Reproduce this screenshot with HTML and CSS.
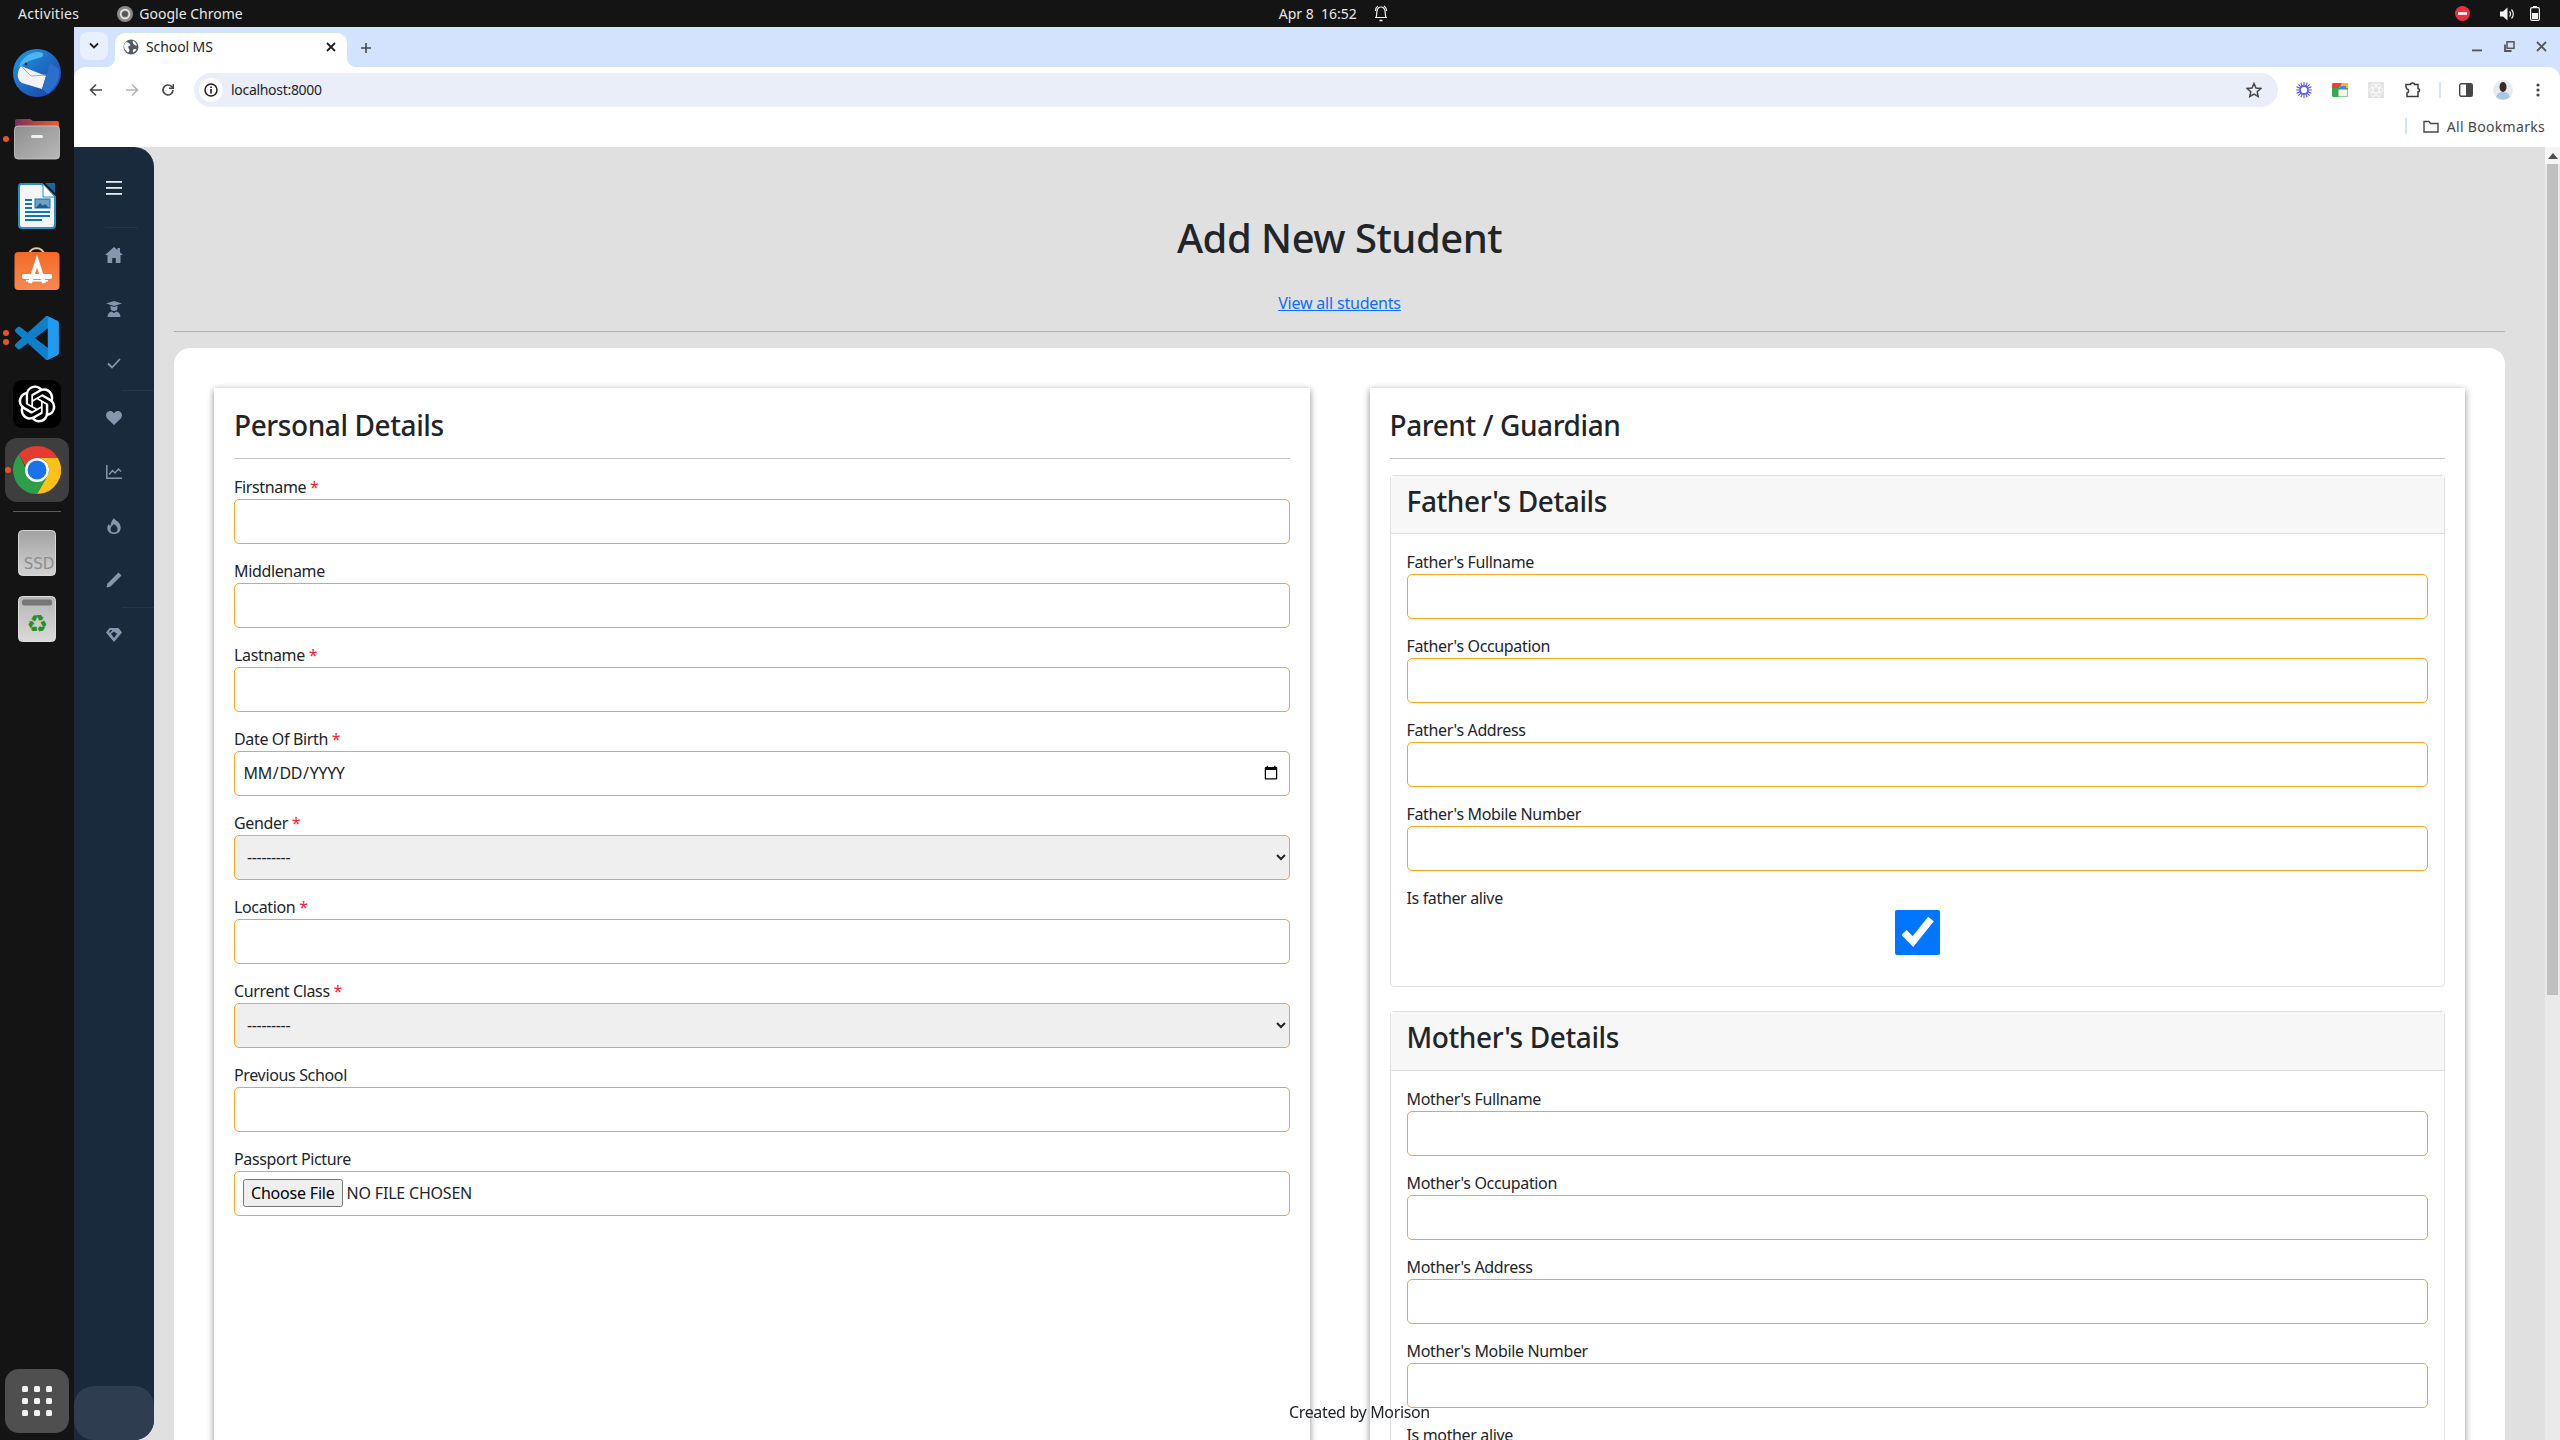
FILE: index.html
```html
<!DOCTYPE html>
<html lang="en">
<head>
<meta charset="utf-8">
<title>School MS</title>
<link rel="stylesheet" href="styles.css">
</head>
<body>
<header class="topbar">
  <span class="top-activities">Activities</span>
  <svg class="top-chrome" width="16" height="16" viewBox="0 0 16 16"><circle cx="8" cy="8" r="8" fill="#8a8a8a"/><circle cx="8" cy="8" r="4.4" fill="none" stroke="#e8e8e8" stroke-width="1.6"/><circle cx="8" cy="8" r="2.8" fill="#555"/></svg>
  <span class="top-app">Google Chrome</span>
  <span class="top-clock">Apr 8&nbsp; 16:52</span>
  <svg class="top-bell" width="14" height="17" viewBox="0 0 14 17" fill="none" stroke="#f2f2f2" stroke-width="1.2"><path d="M2 12.500C3 10 2.500 8 3 6c.5-2.500 2-4 4-4s3.500 1.500 4 4c.5 2-.0 4 1 6.500zM1 12.500h12"/><path d="M1.500 6C1.500 4 2.500 2 4 1M12.500 6c0-2-1-4-2.500-5"/><path d="M5.500 15.500h3" stroke-width="1.600"/></svg>
  <svg class="top-red" width="15" height="15" viewBox="0 0 15 15"><circle cx="7.500" cy="7.500" r="7.500" fill="#ed2f46"/><rect x="3" y="6.200" width="9" height="2.600" fill="#fff"/></svg>
  <svg class="top-sound" width="15" height="14" viewBox="0 0 15 14" fill="none"><path d="M0 4.500h3L7.500 0.500v13L3 9.500H0z" fill="#f2f2f2"/><path d="M9.500 4.500a3.500 3.500 0 0 1 0 5M11.500 2.500a6.500 6.500 0 0 1 0 9" stroke="#f2f2f2" stroke-width="1.200"/></svg>
  <svg class="top-batt" width="10" height="15" viewBox="0 0 10 15"><rect x="0.600" y="1.600" width="8.800" height="12.800" rx="1.500" fill="none" stroke="#f2f2f2" stroke-width="1.200"/><rect x="3" y="0" width="4" height="2" fill="#f2f2f2"/><rect x="2" y="7" width="6" height="6" fill="#f2f2f2"/></svg>
</header>

<div class="desktop">
  <nav class="dock">
    <div class="dock-item">
      <svg width="48" height="48" viewBox="0 0 48 48"><defs><linearGradient id="tb" x1="0" y1="0" x2="1" y2="1"><stop offset="0" stop-color="#1c9be8"/><stop offset="1" stop-color="#1f3b9e"/></linearGradient></defs><circle cx="24" cy="24" r="24" fill="url(#tb)"/><path d="M6 18c2-8 9-14 18-15 10 0 5 5 5 5l-13 4z" fill="#4db4ee"/><path d="M8 17L33 27 29 40 9 34C3 31 4 22 8 17z" fill="#f3f3f6"/><path d="M8 17l10 10 15-1" fill="none" stroke="#a9a9b5" stroke-width="1"/><path d="M33 27L29 40l6 5 8-9c3-5 4-12 3-16l-9-6z" fill="#2a6fc9"/><circle cx="13" cy="15" r="1.500" fill="#3a2a55"/></svg>
    </div>
    <div class="dock-item">
      <span class="dock-dot dot-mid"></span>
      <svg width="46" height="42" viewBox="0 0 46 42"><defs><linearGradient id="ft" x1="0" y1="0" x2="1" y2="0"><stop offset="0" stop-color="#7a2f5e"/><stop offset="1" stop-color="#e8622a"/></linearGradient><linearGradient id="fb" x1="0" y1="0" x2="1" y2="1"><stop offset="0" stop-color="#8f8f8f"/><stop offset="1" stop-color="#b8b8b8"/></linearGradient></defs><path d="M1 10V3q0-2 2-2h13l3 2h24q2 0 2 2v7z" fill="url(#ft)"/><rect x="0.500" y="8" width="45" height="33" rx="3.500" fill="url(#fb)" stroke="#cfcfcf" stroke-width="0.800"/><rect x="17" y="17" width="12" height="3" rx="1.500" fill="#f2f2f2"/></svg>
    </div>
    <div class="dock-item">
      <svg width="38" height="46" viewBox="0 0 38 46"><path d="M3 1h21l13 13v28q0 3-3 3H4q-3 0-3-3V4q0-3 2-3z" fill="#f3f5f7" stroke="#2b90c4" stroke-width="2"/><path d="M27 0h10v10z" fill="#146a9f"/><path d="M25 1v13h12z" fill="#ffffff" stroke="#2b90c4" stroke-width="1"/><path d="M7 16h7v2H7zM7 20h7v2H7zM7 24h7v2H7zM7 28h25v2H7zM7 32h25v2H7zM7 36h17v2H7z" fill="#1273b5"/><rect x="17" y="16" width="15" height="9" fill="#6f9fc4" stroke="#1273b5"/><path d="M18 25l4-5 3 3 2-2 4 4z" fill="#1b5c8e"/></svg>
    </div>
    <div class="dock-item">
      <svg class="icon-software" width="46" height="44" viewBox="0 0 46 44"><defs><linearGradient id="sw" x1="0" y1="0" x2="0" y2="1"><stop offset="0" stop-color="#f46a25"/><stop offset="1" stop-color="#f58a52"/></linearGradient></defs><path d="M15 8c0-9 15-9 15 0" fill="none" stroke="#eacb9c" stroke-width="2"/><rect x="0.500" y="5" width="45" height="38" rx="4" fill="url(#sw)"/><path d="M16 36L23 14l7 22" fill="none" stroke="#fff" stroke-width="4"/><rect x="8" y="27" width="30" height="5" rx="2" fill="#fff"/><rect x="12" y="33" width="22" height="1.500" fill="#fff"/></svg>
    </div>
    <div class="dock-item">
      <span class="dock-dot dot-two-a"></span><span class="dock-dot dot-two-b"></span>
      <svg width="44" height="44" viewBox="0 0 100 100"><path d="M96 10.800 75.400.900a6.200 6.200 0 0 0-7.100 1.200L28.900 38 11.700 25a4.200 4.200 0 0 0-5.300.2L.9 30.200a4.200 4.200 0 0 0 0 6.200L15.800 50 .9 63.600a4.200 4.200 0 0 0 0 6.200l5.500 5a4.200 4.200 0 0 0 5.300.2L28.900 62l39.400 35.900a6.200 6.200 0 0 0 7.100 1.200L96 89.200a6.200 6.200 0 0 0 3.500-5.600V16.400a6.200 6.200 0 0 0-3.500-5.600zM75 72.700 45.100 50 75 27.300z" fill="#0f7fc9"/><path d="M75.400 99.100a6.200 6.200 0 0 1-7.100-1.200 3.600 3.600 0 0 0 6.200-2.600V4.700a3.600 3.600 0 0 0-6.200-2.600 6.200 6.200 0 0 1 7.100-1.200L96 10.800a6.200 6.200 0 0 1 3.500 5.600v67.200a6.200 6.200 0 0 1-3.500 5.600z" fill="#1f9cf0"/></svg>
    </div>
    <div class="dock-item">
      <svg width="48" height="48" viewBox="0 0 48 48"><rect width="48" height="48" rx="9" fill="#000"/><g transform="translate(5.500 5.500) scale(1.540)"><path fill="#fff" d="M22.2819 9.8211a5.9847 5.9847 0 0 0-.5157-4.9108 6.0462 6.0462 0 0 0-6.5098-2.9A6.0651 6.0651 0 0 0 4.9807 4.1818a5.9847 5.9847 0 0 0-3.9977 2.9 6.0462 6.0462 0 0 0 .7427 7.0966 5.98 5.98 0 0 0 .511 4.9107 6.051 6.051 0 0 0 6.5146 2.9001A5.9847 5.9847 0 0 0 13.2599 24a6.0557 6.0557 0 0 0 5.7718-4.2058 5.9894 5.9894 0 0 0 3.9977-2.9001 6.0557 6.0557 0 0 0-.7475-7.0729zm-9.022 12.6081a4.4755 4.4755 0 0 1-2.8764-1.0408l.1419-.0804 4.7783-2.7582a.7948.7948 0 0 0 .3927-.6813v-6.7369l2.02 1.1686a.071.071 0 0 1 .038.052v5.5826a4.504 4.504 0 0 1-4.4945 4.4944zm-9.6607-4.1254a4.4708 4.4708 0 0 1-.5346-3.0137l.142.0852 4.783 2.7582a.7712.7712 0 0 0 .7806 0l5.8428-3.3685v2.3324a.0804.0804 0 0 1-.0332.0615L9.74 19.9502a4.4992 4.4992 0 0 1-6.1408-1.6464zM2.3408 7.8956a4.485 4.485 0 0 1 2.3655-1.9728V11.6a.7664.7664 0 0 0 .3879.6765l5.8144 3.3543-2.0201 1.1685a.0757.0757 0 0 1-.071 0l-4.8303-2.7865A4.504 4.504 0 0 1 2.3408 7.872zm16.5963 3.8558L13.1038 8.364 15.1192 7.2a.0757.0757 0 0 1 .071 0l4.8303 2.7913a4.4944 4.4944 0 0 1-.6765 8.1042v-5.6772a.79.79 0 0 0-.407-.667zm2.0107-3.0231l-.142-.0852-4.7735-2.7818a.7759.7759 0 0 0-.7854 0L9.409 9.2297V6.8974a.0662.0662 0 0 1 .0284-.0615l4.8303-2.7866a4.4992 4.4992 0 0 1 6.6802 4.66zM8.3065 12.863l-2.02-1.1638a.0804.0804 0 0 1-.038-.0567V6.0742a4.4992 4.4992 0 0 1 7.3757-3.4537l-.142.0805L8.704 5.459a.7948.7948 0 0 0-.3927.6813zm1.0976-2.3654l2.602-1.4998 2.6069 1.4998v2.9994l-2.5974 1.4997-2.6067-1.4997Z"/></g></svg>
    </div>
    <div class="dock-item dock-active">
      <span class="dock-dot dot-mid"></span>
      <svg width="48" height="48" viewBox="0 0 48 48"><path d="M24 0a24 24 0 0 1 20.800 12H24a12 12 0 0 0-11.400 8.300L6 8.200A24 24 0 0 1 24 0z" fill="#e53b30"/><path d="M44.800 12A24 24 0 0 1 24 48l10.400-18A12 12 0 0 0 24 12z" fill="#fdc117"/><path d="M24 48A24 24 0 0 1 6 8.200L16.400 30a12 12 0 0 0 18 0z" fill="#2f9e48"/><circle cx="24" cy="24" r="12" fill="#fff"/><circle cx="24" cy="24" r="9.500" fill="#1a73e8"/></svg>
    </div>
    <div class="dock-sep"></div>
    <div class="dock-item">
      <svg width="38" height="46" viewBox="0 0 38 46"><defs><linearGradient id="ssd" x1="0" y1="0" x2="0" y2="1"><stop offset="0" stop-color="#a2a2a2"/><stop offset="1" stop-color="#d2d2d2"/></linearGradient></defs><rect x="0.500" y="0.500" width="37" height="45" rx="4" fill="url(#ssd)" stroke="#d8d8d8"/><text x="21" y="39" text-anchor="middle" class="ssd-text">SSD</text></svg>
    </div>
    <div class="dock-item dock-item-bin">
      <svg width="38" height="46" viewBox="0 0 38 46"><defs><linearGradient id="bin" x1="0" y1="0" x2="0" y2="1"><stop offset="0" stop-color="#b5b5b5"/><stop offset="1" stop-color="#dadada"/></linearGradient></defs><rect x="0.500" y="0.500" width="37" height="45" rx="4" fill="url(#bin)" stroke="#dedede"/><rect x="4" y="3.500" width="30" height="6" rx="2" fill="#777"/><text x="19" y="36" text-anchor="middle" class="bin-text">♻</text></svg>
    </div>
    <div class="dock-apps">
      <div class="apps-grid"><i></i><i></i><i></i><i></i><i></i><i></i><i></i><i></i><i></i></div>
    </div>
  </nav>

  <div class="browser">
    <div class="tabstrip">
      <div class="tab-list-btn"><svg width="12" height="8" viewBox="0 0 12 8" fill="none" stroke="#1f1f1f" stroke-width="1.800"><path d="M2 1.500l4 4 4-4"/></svg></div>
      <div class="tab">
        <svg width="16" height="16" viewBox="0 0 16 16"><circle cx="8" cy="8" r="7.500" fill="#555a60"/><path d="M3 3c2 0 3 1 4 2s0 2-1 2-1 2 0 3 0 3-1 3.500C3 12 1 10 1 7.500 1 5.500 2 4 3 3zM10 1.500c2 1 3.500 3 4 5-1 0-2 0-3-1s-2-3-1-4zM11 10c1 0 2 0 2.500.5-.5 1-2 2.500-3.500 3-.5-1 0-3 1-3.500z" fill="#fff"/></svg>
        <span class="tab-title">School MS</span>
        <svg class="tab-close" width="10" height="10" viewBox="0 0 10 10" stroke="#1f1f1f" stroke-width="1.800"><path d="M1 1l8 8M9 1l-8 8"/></svg>
      </div>
      <svg class="tab-new" width="12" height="12" viewBox="0 0 12 12" stroke="#474747" stroke-width="1.600"><path d="M6 1v10M1 6h10"/></svg>
      <div class="win-controls">
        <svg width="11" height="11" viewBox="0 0 11 11"><rect y="8.500" width="10" height="1.800" fill="#555"/></svg>
        <svg width="11" height="11" viewBox="0 0 11 11" fill="none" stroke="#555" stroke-width="1.500"><rect x="3" y="0.800" width="7" height="6.500"/><path d="M1 3.500v6.500h6.500" stroke-width="1.800"/></svg>
        <svg width="11" height="11" viewBox="0 0 11 11" stroke="#555" stroke-width="1.800"><path d="M1 1l9 9M10 1l-9 9"/></svg>
      </div>
    </div>

    <div class="toolbar">
      <svg class="tb-icon tb-first" width="14" height="14" viewBox="0 0 14 14" fill="none" stroke="#474747" stroke-width="1.600"><path d="M13 7H2M7 1.500L1.500 7 7 12.500"/></svg>
      <svg class="tb-icon" width="14" height="14" viewBox="0 0 14 14" fill="none" stroke="#b4b4b4" stroke-width="1.600"><path d="M1 7h11M7 1.500L12.500 7 7 12.500"/></svg>
      <svg class="tb-icon" width="14" height="14" viewBox="0 0 14 14" fill="none" stroke="#474747" stroke-width="1.600"><path d="M12 7a5 5 0 1 1-1.500-3.600L12 5"/><path d="M12.300 1v4.300H8" stroke-width="1.400"/></svg>
      <div class="omnibox">
        <span class="omni-info"><svg width="14" height="14" viewBox="0 0 14 14"><circle cx="7" cy="7" r="6" fill="none" stroke="#1f1f1f" stroke-width="1.500"/><rect x="6.200" y="6" width="1.600" height="4.500" fill="#1f1f1f"/><rect x="6.200" y="3.400" width="1.600" height="1.600" fill="#1f1f1f"/></svg></span>
        <span class="omni-url">localhost:8000</span>
        <svg class="omni-star" width="16" height="16" viewBox="0 0 16 16" fill="none" stroke="#474747" stroke-width="1.500"><path d="M8 1.500l2 4.500 4.800.5-3.600 3.200 1 4.800L8 12.100l-4.200 2.400 1-4.800L1.200 6.500 6 6z"/></svg>
      </div>
      <div class="tb-ext">
        <svg width="16" height="16" viewBox="0 0 16 16" stroke="#6262f5" stroke-width="1.800"><circle cx="8" cy="8" r="4" fill="none"/><path d="M8 0v4M8 12v4M0 8h4M12 8h4M2.300 2.300l2.800 2.800M10.900 10.900l2.800 2.800M13.700 2.300l-2.800 2.800M5.100 10.900l-2.800 2.800M4.900.6l1.200 3.600M9.900 11.800l1.200 3.600M.6 4.900l3.600 1.200M11.800 9.900l3.600 1.200M11.100.6L9.900 4.200M6.100 11.800l-1.200 3.600M15.400 4.900l-3.600 1.200M4.200 9.900L.6 11.100" stroke-width="1.200"/></svg>
        <svg width="16" height="14" viewBox="0 0 16 14"><rect width="16" height="14" rx="1.500" fill="#34a853"/><path d="M0 1.500Q0 0 1.500 0H10L7 5H0z" fill="#ea4335"/><path d="M10 0h4.500Q16 0 16 1.500V5h-6l-3 0z" fill="#fbbc04"/><rect x="6.500" y="6.500" width="9" height="7" fill="#f8f4e6"/><rect x="8" y="3" width="6" height="3" fill="#4285f4"/></svg>
        <svg width="16" height="16" viewBox="0 0 16 16" fill="none"><rect width="16" height="16" fill="#e3e3e3"/><g stroke="#fafafa" stroke-width="1"><ellipse cx="8" cy="8" rx="7" ry="3"/><ellipse cx="8" cy="8" rx="7" ry="3" transform="rotate(60 8 8)"/><ellipse cx="8" cy="8" rx="7" ry="3" transform="rotate(120 8 8)"/></g></svg>
        <svg class="ext-puzzle" width="16" height="16" viewBox="0 0 16 16" fill="none" stroke="#3c3c3c" stroke-width="1.500"><path d="M1 5V2.500h4.500c0-2 4-2 4 0H13v4c2 0 2 3.500 0 3.500v4.500H2V11c2 0 2-4 0-4z"/></svg>
        <span class="tb-sep"></span>
        <svg width="14" height="14" viewBox="0 0 14 14"><rect x="0.700" y="0.700" width="12.600" height="12.600" rx="1.500" fill="#fff" stroke="#474747" stroke-width="1.400"/><rect x="7" y="1" width="6" height="12" fill="#474747"/></svg>
        <svg width="20" height="20" viewBox="0 0 20 20"><circle cx="10" cy="10" r="10" fill="#e8ecf0"/><path d="M3 17c1-4 4-5 7-5s6 1 7 5a10 10 0 0 1-14 0z" fill="#a9c7e8"/><ellipse cx="10" cy="7" rx="3.500" ry="5" fill="#3a2a22"/></svg>
        <svg class="ext-menu" width="4" height="14" viewBox="0 0 4 14" fill="#474747"><circle cx="2" cy="2" r="1.600"/><circle cx="2" cy="7" r="1.600"/><circle cx="2" cy="12" r="1.600"/></svg>
      </div>
    </div>

    <div class="bookmarks">
      <span class="bm-sep"></span>
      <svg width="16" height="13" viewBox="0 0 16 13" fill="none" stroke="#474747" stroke-width="1.400"><path d="M1 1.500h5l1.500 2H15v8.500H1z"/></svg>
      <span class="bm-label">All Bookmarks</span>
    </div>

    <div class="viewport">
      <aside class="sidebar">
        <div class="side-item"><svg width="16" height="14" viewBox="0 0 16 14" fill="#e6eaee"><rect y="0" width="16" height="1.800"/><rect y="6" width="16" height="1.800"/><rect y="12" width="16" height="1.800"/></svg></div>
        <div class="side-rule side-rule-center"></div>
        <div class="side-item"><svg width="18" height="16" viewBox="0 0 18 16" class="side-svg"><path d="M9 0L0 8h2.500v8h4.700v-5h3.600v5h4.700V8H18l-3-2.700V1h-2.500v2.100z"/></svg></div>
        <div class="side-item"><svg width="16" height="16" viewBox="0 0 16 16" class="side-svg"><path d="M0 2.500L8 0l8 2.500L8 5z"/><path d="M4.500 4.800L8 6l3.500-1.200V6.500a3.500 3.500 0 0 1-7 0z"/><path d="M1.500 16c0-3.500 2-5 4-5.500L8 12l2.500-1.500c2 .5 4 2 4 5.500z"/></svg></div>
        <div class="side-item"><svg width="14" height="11" viewBox="0 0 14 11" fill="none" stroke="#8497ad" stroke-width="1.800"><path d="M1 5.500L5 9.500 13 1"/></svg></div>
        <div class="side-rule side-rule-right"></div>
        <div class="side-item"><svg width="16" height="14" viewBox="0 0 16 14" class="side-svg"><path d="M8 14L1.200 7.500C-.5 5.500-.3 2.500 1.500 1 3.300-.4 6-.3 8 2.200 10-.3 12.700-.4 14.500 1c1.800 1.500 2 4.500.3 6.500z"/></svg></div>
        <div class="side-item"><svg width="16" height="14" viewBox="0 0 16 14" fill="none" stroke="#8497ad" stroke-width="1.500"><path d="M.8 0v13.200H16"/><path d="M3 9.500L6.500 5.500 9 8l3.500-4 2.500 2.500" stroke-width="1.400"/></svg></div>
        <div class="side-item"><svg width="14" height="16" viewBox="0 0 14 16" class="side-svg"><path d="M7 0c.5 2 4 3 5.500 5.500C14.500 9 14 13 11 15c-2.500 1.500-6 1.500-8 0-3-2-3.500-6-1.500-9 .5 1 1 1.500 2 2C3.500 5 5 2 7 0zm0 6C5.500 7.500 3.500 9 3.500 11a3.500 3.500 0 0 0 7 0c0-2-1.500-3.500-3.500-5z"/></svg></div>
        <div class="side-item"><svg width="16" height="16" viewBox="0 0 16 16" class="side-svg"><path d="M12.500.5l3 3-11 11-3.500 1-.5-.5 1-3.500z"/></svg></div>
        <div class="side-rule side-rule-right"></div>
        <div class="side-item"><svg width="16" height="14" viewBox="0 0 16 14" class="side-svg"><path d="M3.500 0h9L16 4.500 8 14 0 4.500zM4.500 4.500L6.300 2H4.200L2.800 4.500zM5 5.800L8 10l3-4.200L8 3.500z"/></svg></div>
        <div class="side-bottom"></div>
      </aside>

      <main class="main">
        <div class="page-head">
          <h1 class="page-title">Add New Student</h1>
          <a class="page-link" href="#">View all students</a>
        </div>
        <hr class="page-rule">
        <form class="sheet">
          <section class="panel">
            <h2 class="panel-title">Personal Details</h2>
            <hr class="panel-rule">
            <div class="field"><label class="field-label">Firstname <span class="req">*</span></label><input class="control" type="text"></div>
            <div class="field"><label class="field-label">Middlename</label><input class="control" type="text"></div>
            <div class="field"><label class="field-label">Lastname <span class="req">*</span></label><input class="control" type="text"></div>
            <div class="field"><label class="field-label">Date Of Birth <span class="req">*</span></label><input class="control control-date" type="date"></div>
            <div class="field"><label class="field-label">Gender <span class="req">*</span></label><select class="control control-select"><option>---------</option></select></div>
            <div class="field"><label class="field-label">Location <span class="req">*</span></label><input class="control" type="text"></div>
            <div class="field"><label class="field-label">Current Class <span class="req">*</span></label><select class="control control-select"><option>---------</option></select></div>
            <div class="field"><label class="field-label">Previous School</label><input class="control" type="text"></div>
            <div class="field"><label class="field-label">Passport Picture</label><input class="control control-file" type="file"></div>
          </section>
          <section class="panel">
            <h2 class="panel-title">Parent / Guardian</h2>
            <hr class="panel-rule">
            <div class="subcard">
              <h3 class="subcard-head">Father's Details</h3>
              <div class="subcard-body">
                <div class="field"><label class="field-label">Father's Fullname</label><input class="control" type="text"></div>
                <div class="field"><label class="field-label">Father's Occupation</label><input class="control" type="text"></div>
                <div class="field"><label class="field-label">Father's Address</label><input class="control" type="text"></div>
                <div class="field"><label class="field-label">Father's Mobile Number</label><input class="control" type="text"></div>
                <div class="field"><label class="field-label">Is father alive</label><input class="control-check" type="checkbox" checked></div>
              </div>
            </div>
            <div class="subcard">
              <h3 class="subcard-head">Mother's Details</h3>
              <div class="subcard-body">
                <div class="field"><label class="field-label">Mother's Fullname</label><input class="control" type="text"></div>
                <div class="field"><label class="field-label">Mother's Occupation</label><input class="control" type="text"></div>
                <div class="field"><label class="field-label">Mother's Address</label><input class="control" type="text"></div>
                <div class="field"><label class="field-label">Mother's Mobile Number</label><input class="control" type="text"></div>
                <div class="field"><label class="field-label">Is mother alive</label><input class="control-check" type="checkbox" checked></div>
              </div>
            </div>
          </section>
        </form>
      </main>

      <div class="scrollbar">
        <div class="scroll-btn"><svg width="10" height="6" viewBox="0 0 10 6" fill="#505050"><path d="M5 0l5 6H0z"/></svg></div>
        <div class="scroll-thumb"></div>
      </div>
    </div>
  </div>
</div>
<footer class="credit">Created by Morison</footer>
</body>
</html>
```
FILE: styles.css
```css
* { box-sizing: border-box; }
html, body { margin: 0; padding: 0; height: 1440px; overflow: hidden; }
body {
  display: flex; flex-direction: column; width: 2560px;
  font-family: "Noto Sans", "Open Sans", sans-serif; font-size: 16px; color: #212529;
  background: #141414; letter-spacing: -0.35px;
}

/* GNOME top bar */
.topbar {
  height: 27px; flex: none; display: flex; align-items: center;
  background: #141414; color: #e8e8e8; font-size: 14px; letter-spacing: 0;
}
.top-activities { margin-left: 18px; letter-spacing: 0.3px; }
.top-chrome { margin-left: 38px; }
.top-app { margin-left: 6px; }
.top-clock { margin-left: 1036px; }
.top-bell { margin-left: 17px; }
.top-red { margin-left: 1067px; }
.top-sound { margin-left: 30px; }
.top-batt { margin-left: 15px; }

.desktop { flex: 1; display: flex; min-height: 0; }

/* dock */
.dock {
  width: 74px; flex: none; background: #141414;
  display: flex; flex-direction: column; align-items: center;
  padding: 14px 0 7px; gap: 2.3px;
}
.dock-item {
  position: relative; width: 64px; height: 64px; flex: none;
  display: flex; align-items: center; justify-content: center; border-radius: 12px;
}
.dock-item-bin { margin-top: -1px; }
.icon-software { margin-bottom: 6px; }
.dock-active { background: #3e3e3e; margin-top: -1px; }
.dock-dot { position: absolute; left: -2px; width: 6px; height: 6px; border-radius: 50%; background: #e95420; }
.dot-mid { top: 29px; }
.dot-two-a { top: 24px; }
.dot-two-b { top: 33px; }
.dock-active .dock-dot { left: 0; }
.dock-sep { width: 48px; height: 1px; background: #5a5a5a; margin: 7px 0 7px; flex: none; }
.ssd-text { font-family: "DejaVu Sans", sans-serif; font-size: 15px; fill: #8d8d8d; letter-spacing: 0; }
.bin-text { font-family: "DejaVu Sans", sans-serif; font-size: 24px; fill: #2a8f22; }
.dock-apps {
  margin-top: auto; width: 64px; height: 64px; border-radius: 14px; background: #4f4f4f;
  display: flex; align-items: center; justify-content: center;
}
.apps-grid { display: grid; grid-template-columns: repeat(3, 6px); gap: 6px; }
.apps-grid i { width: 6px; height: 6px; border-radius: 1.500px; background: #f2f2f2; display: block; }

/* browser chrome */
.browser { flex: 1; min-width: 0; display: flex; flex-direction: column; background: #d3e3fd; }
.tabstrip { height: 40px; flex: none; display: flex; align-items: flex-end; position: relative; }
.tab-list-btn {
  width: 28px; height: 28px; margin: 0 7px 7px 6px; border-radius: 8px; background: #e8f0fe;
  display: flex; align-items: center; justify-content: center;
}
.tab {
  position: relative; width: 232px; height: 34px; background: #fff; border-radius: 10px 10px 0 0;
  display: flex; align-items: center; padding: 0 11px 7px 8px; font-size: 14px; color: #1f1f1f;
}
.tab::before, .tab::after { content: ""; position: absolute; bottom: 0; width: 10px; height: 10px; }
.tab::before { left: -10px; background: radial-gradient(circle at 0 0, #d3e3fd 10px, #fff 10.500px); }
.tab::after { right: -10px; background: radial-gradient(circle at 100% 0, #d3e3fd 10px, #fff 10.500px); }
.tab-title { margin-left: 7px; letter-spacing: -0.1px; }
.tab-close { margin-left: auto; }
.tab-new { margin: 0 0 13px 13px; }
.win-controls { margin-left: auto; display: flex; gap: 21px; margin-right: 13px; margin-bottom: 15px; }
.toolbar {
  height: 40px; flex: none; background: #fff; border-radius: 12px 12px 0 0;
  display: flex; align-items: flex-end; padding-bottom: 0;
}
.tb-icon { margin: 0 11px 10px; }
.tb-first { margin-left: 15px; }
.omnibox {
  margin-left: 8px; width: 2084px; height: 34px; border-radius: 17px; background: #e9eef8;
  display: flex; align-items: center; padding: 0 16px 0 5px;
}
.omni-info {
  width: 24px; height: 24px; border-radius: 50%; background: #fff;
  display: flex; align-items: center; justify-content: center;
}
.omni-url { margin-left: 8px; font-size: 14px; color: #1f1f1f; letter-spacing: -0.3px; padding-bottom: 1px; }
.omni-star { margin-left: auto; margin-right: 0; }
.tb-ext { flex: 1; display: flex; align-items: center; height: 34px; padding-left: 18px; gap: 20px; }
.ext-puzzle { margin-left: 1px; }
.ext-menu { margin-left: 3px; }
.tb-sep { width: 2px; height: 16px; background: #d3e3fd; margin: 0 -2px 0 -2px; }
.bookmarks {
  height: 40px; flex: none; background: #fff; display: flex; align-items: center;
  justify-content: flex-end; padding: 0 15px 2px 0; font-size: 14px; color: #474747;
}
.bm-sep { width: 2px; height: 16px; background: #d3e3fd; margin-right: 16px; }
.bm-label { margin-left: 8px; letter-spacing: 0.3px; }

/* web page */
.viewport { flex: 1; min-height: 0; display: flex; background: #e0e0e0; }
.sidebar {
  width: 80px; flex: none; background: #182a3c; border-radius: 0 20px 20px 0;
  display: flex; flex-direction: column; align-items: stretch; padding-top: 14px;
}
.side-item { height: 54px; flex: none; display: flex; align-items: center; justify-content: center; }
.side-svg { fill: #8497ad; }
.side-rule { height: 1px; flex: none; background: #22354a; }
.side-rule-center { width: 33px; margin: 12px 0 0 31px; }
.side-rule-right { width: 32px; margin-left: 48px; }
.side-bottom { margin-top: auto; height: 54px; background: #2e3e50; border-radius: 20px; }
.main { flex: 1; min-width: 0; padding: 67px 40px 0 20px; overflow: hidden; }
.page-head { display: flex; flex-direction: column; align-items: center; }
.page-title { margin: 0; font-size: 40px; line-height: 48px; font-weight: 500; letter-spacing: -0.5px; }
.page-link { margin-top: 29px; line-height: 24px; color: #0d6efd; letter-spacing: -0.2px; }
.page-rule { margin: 16px 0; border: 0; border-top: 1px solid #b2b2b2; }
.sheet {
  background: #fff; border-radius: 16px; padding: 40px;
  display: grid; grid-template-columns: 1fr 1fr; gap: 60px;
}
.panel { background: #fff; padding: 20px; box-shadow: 0 2px 7px rgba(0,0,0,.45); }
.panel-title { margin: 0; font-size: 28px; line-height: 34px; font-weight: 500; letter-spacing: -0.4px; }
.panel-rule { margin: 16px 0; border: 0; border-top: 1px solid #c8c8c8; }
.field { display: flex; flex-direction: column; margin-bottom: 15px; }
.field-label { line-height: 24px; height: 24px; }
.req { color: #ff1a3c; }
.control {
  height: 45px; width: 100%; padding: 6px 8px; border: 1.500px solid #f5a623; border-radius: 5px;
  background: #fff; font: inherit; color: #212529; letter-spacing: inherit; text-transform: uppercase; outline: 0;
}
.control-date { padding: 4px 7.500px 6px; }
.control-select { background: #efefef; text-transform: none; padding: 4px 8px 6px; }
.control-file { padding: 7px 8px; letter-spacing: -0.2px; }
.control-file::file-selector-button { font: inherit; letter-spacing: inherit; margin-right: 4px; }
.control-check { width: 100%; height: 45px; margin: 0; }
.subcard { border: 1px solid #dfdfdf; border-radius: 4px; margin-bottom: 24px; }
.subcard-head {
  margin: 0; padding: 8px 16px 0; height: 58px; font-size: 28px; line-height: 34px; font-weight: 500;
  letter-spacing: -0.4px; background: #f7f7f7; border-bottom: 1px solid #dfdfdf;
}
.subcard + .subcard .subcard-head { height: 59px; }
.subcard-body { padding: 16px; }

.scrollbar { width: 15px; flex: none; background: #eaeaea; display: flex; flex-direction: column; align-items: center; }
.scroll-btn { width: 15px; height: 17px; background: #f5f5f5; display: flex; align-items: center; justify-content: center; }
.scroll-thumb { width: 11px; height: 831px; background: #c0c0c0; }

.credit { position: fixed; left: 1289px; top: 1400px; line-height: 24px; color: #212529; }
```
